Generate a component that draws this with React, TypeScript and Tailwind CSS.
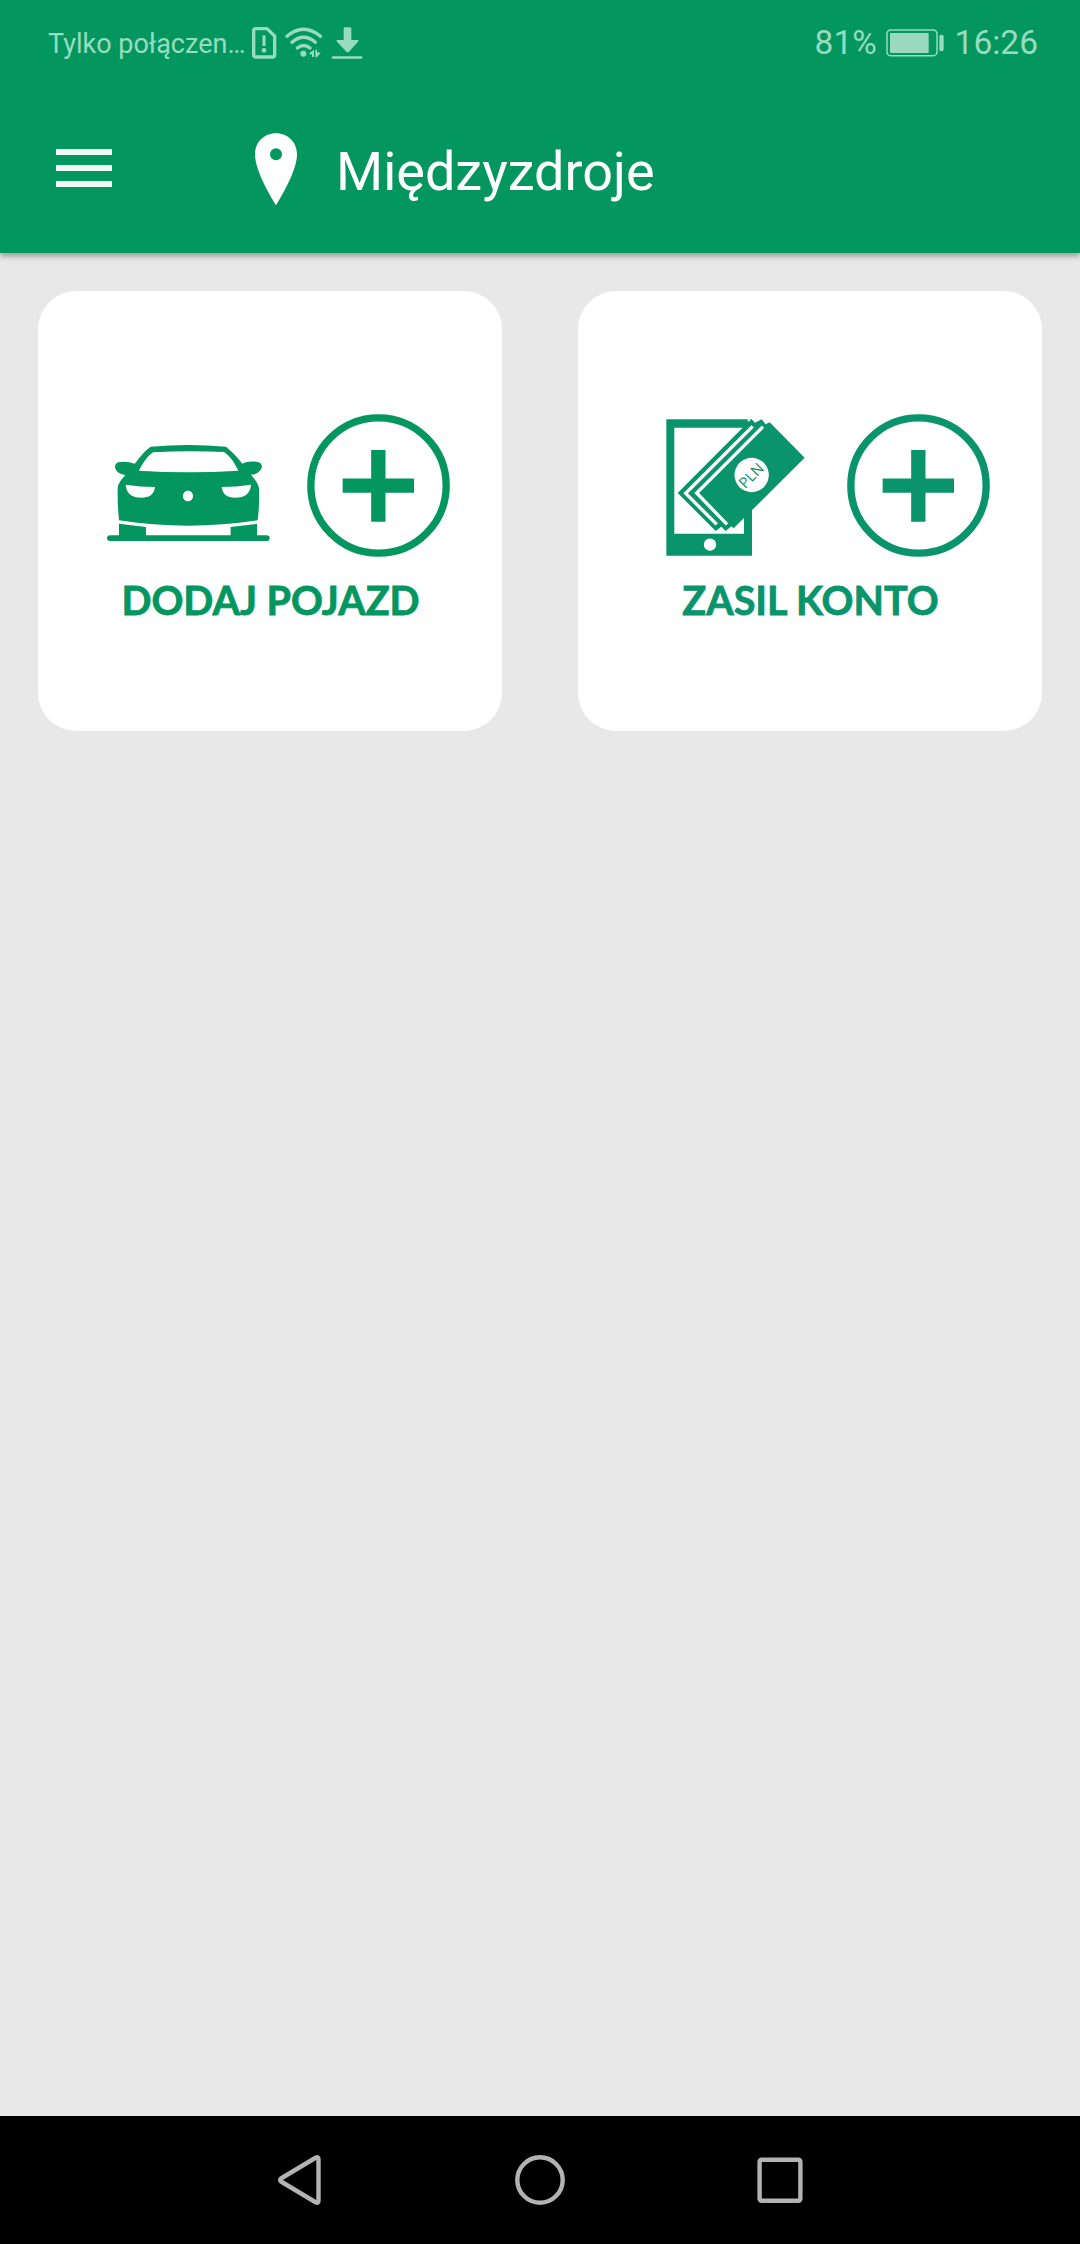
import type { ReactNode } from "react";

function StatusBar() {
  return (
    <div className="flex h-[86px] items-center justify-between pr-[42px] pl-12 font-[Roboto,sans-serif] text-[#97dcbf]">
      <div className="flex items-center">
        <span className="w-[204px] pt-0.5 text-[27px] leading-8 whitespace-nowrap">Tylko połączen…</span>
        <svg className="h-8 w-[25px]" viewBox="0 0 75 96" fill="none">
          <path d="M11 5H45L68 27V83Q68 90 61 90H12Q5 90 5 83V12Q5 5 11 5Z" stroke="currentColor" strokeWidth="10" strokeLinejoin="round" />
          <path d="M36 25V57" stroke="currentColor" strokeWidth="9" />
          <circle cx="36" cy="70" r="7" fill="currentColor" />
        </svg>
        <svg className="ml-[8px] h-8 w-[38px]" viewBox="0 0 114 96" fill="none">
          <g stroke="currentColor" strokeWidth="10" strokeLinecap="round">
            <path d="M6 28Q56-14 106 28" />
            <path d="M21 46Q56 16 91 46" />
            <path d="M37 63Q56 48 75 63" />
          </g>
          <circle cx="55" cy="80" r="9" fill="currentColor" />
          <path d="M87 68V90H81V82H73V79ZM91 68H96V76L107 77L96 91H91Z" fill="currentColor" />
        </svg>
        <svg className="ml-[8px] h-8 w-[32px]" viewBox="0 0 96 96" fill="currentColor">
          <path d="M38 5Q38 1 42 1H57Q61 1 61 5V39H80Q85 39 81 44L54 74Q50 78 46 74L18 44Q14 39 19 39H38Z" />
          <rect x="2" y="88" width="92" height="7" rx="3" />
        </svg>
      </div>
      <div className="flex items-center text-[33.5px] leading-10">
        <span className="w-[71px]">81%</span>
        <svg className="h-[28px] w-[58px]" viewBox="0 0 174 84" fill="none">
          <rect x="3" y="3" width="150" height="77" rx="11" stroke="currentColor" strokeWidth="4.5" />
          <rect x="12" y="12" width="116" height="60" rx="3" fill="#9ad9c0" />
          <rect x="160" y="17" width="13" height="50" rx="6" fill="currentColor" />
        </svg>
        <span className="ml-[11px]">16:26</span>
      </div>
    </div>
  );
}

function Header() {
  return (
    <header className="relative h-[253px] bg-[#04965f] shadow-[0_3px_6px_rgba(0,0,0,0.35)]">
      <StatusBar />
      <div className="flex h-[167px] items-start pl-14 text-white">
        <div className="mt-[63px] flex w-14 flex-col gap-[10px]">
          <div className="h-1.5 bg-[#f0fbf7]" />
          <div className="h-1.5 bg-[#f0fbf7]" />
          <div className="h-1.5 bg-[#f0fbf7]" />
        </div>
        <svg className="mt-[46px] ml-[142px] h-[74px] w-[44px]" viewBox="0 0 132 222" fill="currentColor">
          <path fillRule="evenodd" d="M66 4C30 4 3 31 3 67C3 108 36 171 66 220C96 171 129 108 129 67C129 31 102 4 66 4ZM66 48.500A18 18 0 1 1 66 84.500A18 18 0 1 1 66 48.500Z" />
        </svg>
        <h1 className="mt-[54px] ml-[38px] font-[Roboto,sans-serif] text-[54px] leading-[64px] font-normal">Międzyzdroje</h1>
      </div>
    </header>
  );
}

function PlusCircle() {
  return (
    <svg className="h-[170px] w-[180px]" viewBox="0 0 540 510" fill="none" stroke="currentColor">
      <circle cx="265.500" cy="256.500" r="203" strokeWidth="22" />
      <path d="M265 150V365M158 257H372" strokeWidth="43" />
    </svg>
  );
}

function CarIcon() {
  return (
    <svg className="h-[170px] w-[200px]" viewBox="0 0 600 510" fill="currentColor">
      <path
        fillRule="evenodd"
        d="M182 140Q295 130 408 140C430 158 445 175 457 191C470 184 491 183 506 187C520 193 517 206 508 214C500 222 493 224 483 224C494 238 504 248 507 264Q509 315 503 361Q400 377 295 377Q190 377 87 361Q82 310 83 264C85 248 96 238 106 225C94 224 85 220 78 210C72 200 75 191 85 187C100 183 119 185 134 191C148 175 160 155 182 140ZM189 157C172 169 158 190 147 212Q295 221 445 212C435 190 420 168 402 156Q295 151 189 157ZM107 254Q150 261 195 261C192 283 180 293 154 293C126 293 109 281 107 254ZM483 254Q440 261 395 261C398 283 410 293 436 293C464 293 481 281 483 254ZM294 272C274 272 274 304 294 304C314 304 314 272 294 272Z"
      />
      <path d="M87 371L168 381V406H422V381L501 372V406H530Q539 406 539 414Q539 423 530 423H60Q51 423 51 414Q51 406 60 406H87Z" />
    </svg>
  );
}

function PhoneMoneyIcon() {
  return (
    <svg className="h-[170px] w-[180px]" viewBox="0 0 540 510">
      <path fill="currentColor" fillRule="evenodd" d="M49 58H306V467H49ZM73 83H282V401H73Z" />
      <circle cx="180" cy="434" r="18.500" fill="white" />
      <path fill="white" d="M293 64V58H306V70Z" />
      <path fill="currentColor" d="M83 279L304 57L315 68L335 58L347 73L359 67L464 173L251 385L244 379L227 393L214 380L197 393Z" />
      <path fill="none" stroke="white" strokeWidth="10" d="M308 79L107 280L200 373M339 80L140 279L231 373" />
      <circle cx="305" cy="225" r="51.500" fill="white" />
      <text
        transform="translate(305 228) rotate(-46)"
        y="14"
        textAnchor="middle"
        textLength="84"
        lengthAdjust="spacingAndGlyphs"
        fill="currentColor"
        className="font-[Open_Sans,sans-serif] text-[45px]"
      >
        PLN
      </text>
    </svg>
  );
}

function ActionCard({ icon, label, inset, color }: { icon: ReactNode; label: string; inset: string; color: string }) {
  return (
    <button className={`flex h-[440px] w-[464px] flex-col rounded-[38px] bg-white pt-[109px] ${color}`}>
      <div className={`flex ${inset}`}>
        {icon}
        <PlusCircle />
      </div>
      <span className="mt-1.5 flex w-full justify-center pl-px font-[Lato,sans-serif] text-[39.5px] leading-[48px] font-bold whitespace-nowrap [-webkit-text-stroke:0.8px_currentColor]">
        {label}
      </span>
    </button>
  );
}

export default function App() {
  return (
    <div className="flex h-[2244px] w-[1080px] flex-col bg-[#e8e8e8]">
      <Header />
      <main className="flex flex-1 items-start justify-between px-[38px] pt-[38px]">
        <ActionCard icon={<CarIcon />} inset="pl-[52px]" color="text-[#04965f]" label="DODAJ POJAZD" />
        <ActionCard icon={<PhoneMoneyIcon />} inset="pl-[72px]" color="text-[#09946b]" label="ZASIL KONTO" />
      </main>
      <nav className="flex h-32 items-center justify-between bg-black px-[276px] text-[#b3b3b3]">
        <svg className="h-[52px] w-[46px]" viewBox="0 0 46 52" fill="none" stroke="currentColor" strokeWidth="4.400" strokeLinejoin="round">
          <path d="M5 24.500L40 3.500Q42.500 2.500 42.500 5V47Q42.500 49.500 40 48.500L5 27.500Q3.500 26 5 24.500Z" />
        </svg>
        <svg className="h-[52px] w-[52px]" viewBox="0 0 52 52" fill="none" stroke="currentColor" strokeWidth="4.400">
          <circle cx="27" cy="26" r="22.700" />
        </svg>
        <svg className="h-[52px] w-[48px]" viewBox="0 0 48 52" fill="none" stroke="currentColor" strokeWidth="4.400">
          <rect x="3.600" y="5.700" width="40.800" height="41" rx="2" />
        </svg>
      </nav>
    </div>
  );
}
